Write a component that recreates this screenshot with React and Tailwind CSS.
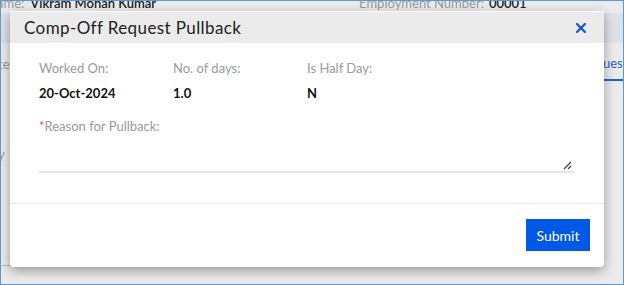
import { X } from 'lucide-react';

const FIELDS = [
  { label: 'Worked On:', value: '20-Oct-2024' },
  { label: 'No. of days:', value: '1.0' },
  { label: 'Is Half Day:', value: 'N' },
];

export default function App() {
  return (
    <div
      className="relative w-[624px] h-[285px] overflow-hidden border border-[#5b9bd5] bg-[#ebebeb]"
      style={{ fontFamily: 'Lato, "Open Sans", sans-serif' }}
    >
      {/* page behind the overlay */}
      <div className="flex items-end h-[9px] text-[13px] leading-none">
        <span className="text-[#9a9a9a] -ml-[4px]">ame:</span>
        <span className="ml-[6px] font-semibold text-[#222]">Vikram Mohan Kumar</span>
        <span className="ml-[203px] text-[#9a9a9a]">Employment Number:</span>
        <span className="ml-[5px] font-semibold text-[#222]">00001</span>
      </div>
      <div className="h-[30px] mt-[3px] bg-[#dde1e8]" />
      <div className="flex justify-between">
        <div className="flex flex-col text-[13px] text-[#9a9a9a] -ml-[3px]">
          <span className="mt-[12px]">te</span>
          <span className="mt-[70px]">y</span>
        </div>
        <div className="flex flex-col w-[20px] mt-[12px]">
          <span className="text-[13px] text-[#2f5fd6] leading-[16px]">ues</span>
          <div className="mt-[8px] h-[2px] bg-[#1f5fe0]" />
        </div>
      </div>
      <div className="absolute left-0 top-[264px] w-[58px] h-px bg-[#bdbdbd]" />

      {/* modal */}
      <div className="absolute left-[9px] top-[10px] w-[594px] h-[256px] bg-white rounded-b-[4px] shadow-[0_4px_12px_rgba(0,0,0,0.35)] flex flex-col">
        <div className="h-[31px] mt-px bg-[#ebebeb] flex items-center justify-between pl-[14px] pr-[15px]">
          <h2 className="text-[17px] tracking-[0.4px] text-[#222]">Comp-Off Request Pullback</h2>
          <X className="w-[16px] h-[16px] text-[#1a55d6]" strokeWidth={3.4} />
        </div>

        <div className="px-[29px] pt-[17px]">
          <div className="flex">
            {FIELDS.map(f => (
              <div key={f.label} className="w-[134px] flex flex-col">
                <span className="text-[13px] text-[#9a9a9a] leading-[16px]">{f.label}</span>
                <span className="mt-[9px] text-[13px] font-bold text-[#111] leading-[16px]">{f.value}</span>
              </div>
            ))}
          </div>
          <div className="mt-[17px] text-[13px] text-[#9a9a9a] leading-[16px]">
            <span className="text-[#e05a5a]">*</span>Reason for Pullback:
          </div>
          <div className="relative mt-[25px] w-[535px] h-[14px] border-b-2 border-[#e6e6e6]">
            <svg className="absolute right-[2px] bottom-[1px]" width="9" height="9" viewBox="0 0 9 9">
              <path d="M1 8 L8 1 M5 8 L8 5" stroke="#444" strokeWidth="1.3" fill="none" />
            </svg>
          </div>
        </div>

        <div className="mt-[30px] h-px bg-[#e8e8e8]" />
        <div className="flex justify-end pr-[14px] pt-[15px]">
          <button className="w-[64px] h-[32px] bg-[#0058e6] text-white text-[14px]">Submit</button>
        </div>
      </div>
    </div>
  );
}
